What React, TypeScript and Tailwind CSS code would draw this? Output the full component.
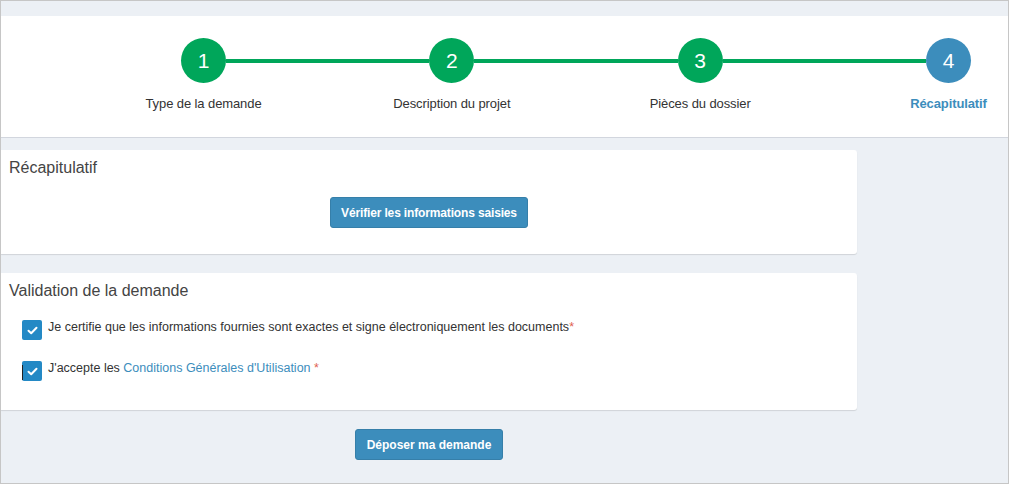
import React from 'react';

const steps = [
  { n: 1, label: 'Type de la demande' },
  { n: 2, label: 'Description du projet' },
  { n: 3, label: 'Pièces du dossier' },
  { n: 4, label: 'Récapitulatif', active: true },
];

const Check = () => (
  <svg width="11" height="9" viewBox="0 0 11 9" fill="none">
    <path d="M1.5 4.8 L4.2 7.3 L9.5 1.8" stroke="white" strokeWidth="2" strokeLinecap="round" strokeLinejoin="round" />
  </svg>
);

const Stepper: React.FC = () => (
  <div className="bg-white border-b border-[#d2d6de] h-[122px] pt-[22px] pl-[180px] pr-[37px]">
    <div className="flex items-center">
      {steps.map((s, i) => (
        <React.Fragment key={s.n}>
          <div
            className={`w-[45px] h-[45px] shrink-0 rounded-full flex items-center justify-center text-white text-[21px] ${
              s.active ? 'bg-[#3c8dbc]' : 'bg-[#00a65a]'
            }`}
          >
            {s.n}
          </div>
          {i < steps.length - 1 && <div className="flex-1 h-[4px] bg-[#00a65a]" />}
        </React.Fragment>
      ))}
    </div>
    <div className="flex justify-between mt-[12px]">
      {steps.map(s => (
        <div key={s.n} className="w-[45px] flex justify-center">
          <span
            className={`whitespace-nowrap text-[13px] leading-[18px] tracking-[-0.1px] ${
              s.active ? 'text-[#3c8dbc] font-bold' : 'text-[#333]'
            }`}
          >
            {s.label}
          </span>
        </div>
      ))}
    </div>
  </div>
);

const App: React.FC = () => {
  return (
    <div
      className="w-[1009px] h-[484px] border border-[#c6c6c6] bg-[#ecf0f5] pt-[15px] overflow-hidden"
      style={{ fontFamily: '"Liberation Sans", Arial, sans-serif' }}
    >
      <Stepper />

      <div className="w-[856px] pt-[12px]">
        <div className="bg-white rounded-r-[3px] shadow-[0_1px_1px_rgba(0,0,0,0.12)] h-[104px] pt-[8px] px-[8px]">
          <h3 className="text-[16px] leading-[20px] text-[#444]">Récapitulatif</h3>
          <div className="flex justify-center mt-[19px]">
            <button className="h-[31px] px-[10px] bg-[#3c8dbc] border border-[#367fa9] rounded-[3px] text-white text-[12px] font-bold tracking-[-0.15px]">
              Vérifier les informations saisies
            </button>
          </div>
        </div>

        <div className="bg-white rounded-r-[3px] shadow-[0_1px_1px_rgba(0,0,0,0.12)] h-[137px] mt-[19px] pt-[8px] px-[8px]">
          <h3 className="text-[16px] leading-[20px] text-[#444]">Validation de la demande</h3>
          <div className="pl-[13px] mt-[19px] flex flex-col gap-[21px] text-[12.5px] text-[#333]">
            <label className="flex items-center gap-[6px]">
              <span className="w-[20px] h-[20px] rounded-[2px] bg-[#2489c5] flex items-center justify-center shrink-0">
                <Check />
              </span>
              <span className="mt-[-6px]">
                Je certifie que les informations fournies sont exactes et signe électroniquement les documents
                <span className="text-[#e0604f]">*</span>
              </span>
            </label>
            <label className="flex items-center gap-[6px]">
              <span className="relative w-[20px] h-[20px] rounded-[2px] bg-[#2489c5] flex items-center justify-center shrink-0">
                <span className="absolute left-0 top-[4px] w-[1px] h-[15px] bg-[#222]" />
                <Check />
              </span>
              <span className="mt-[-6px]">
                J'accepte les <span className="text-[#3c8dbc]">Conditions Générales d'Utilisation</span>{' '}
                <span className="text-[#e0604f]">*</span>
              </span>
            </label>
          </div>
        </div>

        <div className="flex justify-center mt-[19px]">
          <button className="h-[31px] px-[11px] bg-[#3c8dbc] border border-[#367fa9] rounded-[3px] text-white text-[12px] font-bold">
            Déposer ma demande
          </button>
        </div>
      </div>
    </div>
  );
};

export default App;
